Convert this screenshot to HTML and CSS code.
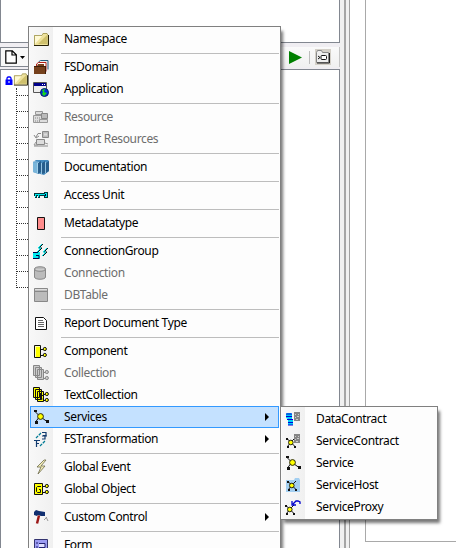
FILE: index.html
```html
<!DOCTYPE html>
<html lang="en">
<head>
<meta charset="utf-8">
<title>Explorer</title>
<link rel="stylesheet" href="styles.css">
</head>
<body>
<svg class="defs" aria-hidden="true">
<symbol id="folder" viewBox="0 0 16 16"><path d="M1 4h8l1-2h4l1 2v10H1z" fill="#eee29c"/><path d="M2 5l8-1-8 9z" fill="#fff9d4"/><path d="M14 4l-9 9h9z" fill="#cfc06c"/><path d="M1.500 14V4.500H9l1-2h4l1 2V14" fill="none" stroke="#918948" stroke-width=".7"/><path d="M1 14.500h14.500V4" fill="none" stroke="#262006"/></symbol>
<symbol id="atom" viewBox="0 0 16 16"><path d="M2 2.500l5 5 7 5M7 7l-4.500 6" stroke="#111" fill="none"/><path d="M1 1h3v2H1zM2 12h3v3H2zM13 11h3v3h-3z" fill="#111"/><circle cx="7.500" cy="7.500" r="2.900" fill="#ff0" stroke="#252510"/></symbol>
<symbol id="mini" viewBox="0 0 10 11"><path d="M1 1.500l3 3 5 5M5 5l-3.500 4.500M5 5l4-4" stroke="#111" fill="none"/><path d="M0 1h2v2H0zM1 9h2v2H1zM8 9h2v2H8z" fill="#111"/><circle cx="4.800" cy="5.500" r="2.300" fill="#ff0" stroke="#252510"/></symbol>
<symbol id="rack" viewBox="0 0 6 9"><path d="M0 0h6v9H0z" fill="#858585"/><path d="M1 2.500h1M4 2.500h1M1 5.500h1M3 4.500h2M2 7.500h2" stroke="#ccc" fill="none"/></symbol>
<symbol id="nodes" viewBox="0 0 6 12"><path d="M0 3.500h2M0 9.500h2" stroke="currentColor"/><circle cx="3.800" cy="3" r="1.600" fill="var(--fill)" stroke="currentColor"/><circle cx="3.800" cy="9" r="1.600" fill="var(--fill)" stroke="currentColor"/></symbol>
</svg>
<div class="window">
  <div class="explorer">
    <div class="output"></div>
    <div class="toolbar">
      <div class="tools-left">
        <svg class="page" viewBox="0 0 12 14"><path d="M.8 .8h6.500l4 4v8.400H.8zM7 1v4h4" fill="#fff" stroke="#000" stroke-width="1.200"/></svg>
        <svg class="drop" viewBox="0 0 5 3"><path d="M0 0h5L2.500 3z"/></svg>
      </div>
      <div class="tools-right">
        <svg class="play" viewBox="0 0 13 13"><path d="M0 0l13 6.500L0 13z" fill="#008000"/></svg>
        <span class="divider"></span>
        <svg class="camera" viewBox="0 0 16 16"><path d="M0 0h16v16H0z" fill="#d4d0c8"/><path d="M1.500 13.500v-10l1-2h4l1 2h6v10z" fill="#eee" stroke="#888"/><path d="M2 14h12.500V4" fill="none" stroke="#222"/><rect x="6" y="6.500" width="5.500" height="4" rx="1" fill="#fff" stroke="#111"/><path d="M3 7l2 1.500L3 10" fill="none" stroke="#111"/></svg>
      </div>
    </div>
    <div class="tree">
      <div class="root"><svg class="lock" viewBox="0 0 8 9"><path d="M2 4V2l1-1h2l1 1v2" fill="none" stroke="#00f" stroke-width="1.300"/><path d="M.5 3.500h7V9h-7z" fill="#00f"/><path d="M4 5v2" stroke="#fff"/></svg><svg class="icon"><use href="#folder"/></svg></div>
      <div class="branches"><i></i><i></i><i></i><i></i><i></i><i></i><i></i><i></i><i></i><i></i><i></i><i></i><i></i></div>
    </div>
  </div>
  <div class="splitter"></div>
  <div class="document"><div class="sheet"></div></div>
</div>

<div class="menu main-menu">
  <div class="item"><svg class="icon"><use href="#folder"/></svg><span>Namespace</span></div>
  <hr>
  <div class="item"><svg class="icon" viewBox="0 0 16 16"><path d="M5.500 5V3l2-1.500h7.500v9" fill="#eee" stroke="#255b7b"/><path d="M3.500 7V5l2-1.500h7.500v9" fill="#fff" stroke="#b32216"/><path d="M1 7h3l1-2h6v2h2v8H1z" fill="#75401c"/><path d="M1 7.500h12M12.500 8v7" stroke="#401f09"/></svg><span>FSDomain</span></div>
  <div class="item"><svg class="icon" viewBox="0 0 16 16"><path d="M.5 1.500h13v10H.5z" fill="#eee" stroke="#555"/><path d="M1 2h12v3H1z" fill="#00008b"/><path d="M9 3.500h1M11 3.500h1" stroke="#fff"/><circle cx="11.500" cy="11.500" r="4" fill="#0030db" stroke="#032060"/><path d="M9 9l3-1-1 3 3 1-3 3-2-2 1-2z" fill="#19d719"/></svg><span>Application</span></div>
  <hr>
  <div class="item disabled"><svg class="icon" viewBox="0 0 16 16"><path d="M2.500 2.500h7v3h-7zM.5 6.500h11v7H.5z" fill="#ddd" stroke="#999"/><path d="M2 9h6M2 12h6" stroke="#888" stroke-dasharray="1"/><path d="M8.500 4.500h6v5h-6z" fill="#bbb" stroke="#888"/><path d="M6.500 10.500h8v3h-8z" fill="#ddd" stroke="#999"/></svg><span>Resource</span></div>
  <div class="item disabled"><svg class="icon" viewBox="0 0 16 16"><path d="M9.500 .5h6v6h-6z" fill="#bbb" stroke="#888"/><path d="M11 2.500h3v2h-3z" fill="#ddd"/><path d="M8 2.500H5L3 6M1 4l2 3 3-2" fill="none" stroke="#888"/><path d="M3.500 8.500h8v5h-8zM1 15h14" fill="#ddd" stroke="#888"/><path d="M3 11l-2 3h4M12 12l3 1" fill="none" stroke="#999"/></svg><span>Import Resources</span></div>
  <hr>
  <div class="item"><svg class="icon" viewBox="0 0 16 16"><path d="M0 3l3-2h12l1 1v10l-5 4-11-3z" fill="#458bbf"/><path d="M0 3l5 1v11l-5-2z" fill="#79b5da"/><path d="M5 4l3-2v11l-3 2zM9 4l3-2v12l-3 1zM13 4l3-2v10l-3 2z" fill="#285f8d"/><path d="M1 2.500l5 1M4.500 4v10M8.500 4v11M12.500 3v11" stroke="#b4dbf1" stroke-width=".7"/></svg><span>Documentation</span></div>
  <hr>
  <div class="item"><svg class="icon" viewBox="0 0 16 16"><path d="M1 6h10V5h4v6h-4V9H7v2H5V9H4v2H2V9H1z" fill="#00373c"/><path d="M2 7h10V6h2v4h-2V8H6v2H5V8H3v2H2z" fill="#00e9ed"/><path d="M12.500 7v2" stroke="#003"/></svg><span>Access Unit</span></div>
  <hr>
  <div class="item"><svg class="icon" viewBox="0 0 16 16"><path d="M4.500 2.500h7v12h-7z" fill="#ff8c8c" stroke="#151010"/></svg><span>Metadatatype</span></div>
  <hr>
  <div class="item"><svg class="icon" viewBox="0 0 16 16"><path d="M0 9h7v7H0z" fill="#00eaf0"/><path d="M0 9.500h5M0 15.500h6M3 12.500h3v3" fill="none" stroke="#004"/><path d="M10 1L6 5h3L5 9M15 5l-4 4h3l-4 4" stroke="#111" fill="none"/><path d="M9 1L5 5h3L4 9M14 5l-4 4h3l-4 4" fill="none" stroke="#00e5e9"/></svg><span>ConnectionGroup</span></div>
  <div class="item disabled"><svg class="icon" viewBox="0 0 16 16"><path d="M1.500 4c0-3 11-3 11 0v8c0 3-11 3-11 0z" fill="#bbb" stroke="#888"/><path d="M1.500 4c0 3 11 3 11 0" fill="#ccc" stroke="#888"/></svg><span>Connection</span></div>
  <div class="item disabled"><svg class="icon" viewBox="0 0 16 16"><path d="M1.500 1.500h13v13h-13z" fill="#bbb" stroke="#888"/><path d="M2 4.500h12" stroke="#888"/><path d="M2 2.500h12" stroke="#ddd"/></svg><span>DBTable</span></div>
  <hr>
  <div class="item"><svg class="icon" viewBox="0 0 16 16"><path d="M2.500 2.500h8l3 3v9h-11z" fill="#fff" stroke="#111"/><path d="M5 5.500h5M5 7.500h6M5 9.500h6M5 11.500h6" stroke="#666"/></svg><span>Report Document Type</span></div>
  <hr>
  <div class="item"><svg class="icon yellow" viewBox="0 0 16 16"><path d="M1.500 2.500h6v12h-6z" fill="#ff0" stroke="#111"/><path d="M2.500 3v11M3 3.500h4" stroke="#ffffae"/><use href="#nodes" x="8" y="3" width="6" height="12"/></svg><span>Component</span></div>
  <div class="item disabled"><svg class="icon gray" viewBox="0 0 16 16"><path d="M.5 .5h6v10h-6zM2.500 2.500h6v10h-6zM4.500 4.500h6v10h-6z" fill="#ccc" stroke="#888"/><use href="#nodes" x="10" y="4" width="6" height="12"/></svg><span>Collection</span></div>
  <div class="item"><svg class="icon yellow" viewBox="0 0 16 16"><path d="M.5 .5h6v10h-6zM2.500 2.500h6v10h-6zM4.500 4.500h6v10h-6z" fill="#ff0" stroke="#111"/><path d="M7.500 6v6h2M6 8.500h4" fill="none" stroke="#111"/><use href="#nodes" x="10" y="4" width="6" height="12"/></svg><span>TextCollection</span></div>
  <div class="item active"><svg class="icon"><use href="#atom"/></svg><span>Services</span><b class="arrow"></b></div>
  <div class="item"><svg class="icon" viewBox="0 0 16 16"><path d="M1 9.500h6M3.500 10v6M3 12.500h3M9 1.500h4v3h-3M9 5h5M12 5v3h-3" stroke="#123b6f" stroke-width="1.200" fill="none"/><path d="M7 15l5-5M3 7l5-5" stroke="#007b95" stroke-width="1.300" stroke-dasharray="3 1" fill="none"/></svg><span>FSTransformation</span><b class="arrow"></b></div>
  <hr>
  <div class="item"><svg class="icon" viewBox="0 0 16 16"><path d="M11 1L4 8h4l-3 7 7-8H8l5-6z" fill="#f5efb9" stroke="#6c6949" stroke-width=".8"/></svg><span>Global Event</span></div>
  <div class="item"><svg class="icon yellow" viewBox="0 0 16 16"><path d="M1.500 2.500h8v11h-8z" fill="#ff0" stroke="#111"/><path d="M8 5.500H4.500L3.500 6.500v4l1 1H7.500v-3H6" fill="none" stroke="#111"/><use href="#nodes" x="10" y="2" width="6" height="12"/></svg><span>Global Object</span></div>
  <hr>
  <div class="item"><svg class="icon" viewBox="0 0 16 16"><path d="M1 3l2-2 3 1 6 1v4H8L5 6 4 7 1 6z" fill="#102f70"/><path d="M6 6.500L4 14.500" stroke="#9c1919" stroke-width="2.500"/><path d="M11 11l3-3M13 8l2 4" stroke="#999"/></svg><span>Custom Control</span><b class="arrow"></b></div>
  <hr>
  <div class="item"><svg class="icon" viewBox="0 0 16 16"><path d="M1.500 2.500h13v13h-13z" fill="#9b9bf2" stroke="#33336f"/><path d="M6 6.500h6v4H6M3 6h2M3 10h2" fill="#dedeff" stroke="#222270"/></svg><span>Form</span></div>
</div>

<div class="menu submenu">
  <div class="item"><svg class="icon" viewBox="0 0 16 16"><path d="M1 3l1-1h4l1 1v5h1v6H3V8L1 7z" fill="#00cff5"/><path d="M1 3h6M1 5.500h6M2 8.500h6M3 11.500h5M3 14h5" stroke="#0000d5" stroke-width="1.200"/><use href="#rack" x="9" y="1" width="6" height="9"/></svg><span>DataContract</span></div>
  <div class="item"><svg class="icon" viewBox="0 0 16 16"><use href="#mini" x="1" y="4" width="10" height="11"/><use href="#rack" x="9" y="1" width="6" height="9"/></svg><span>ServiceContract</span></div>
  <div class="item"><svg class="icon"><use href="#atom"/></svg><span>Service</span></div>
  <div class="item"><svg class="icon" viewBox="0 0 16 16"><path d="M1 3h8l1-2h4l1 2v12H1z" fill="#a3cff1"/><use href="#mini" x="2" y="3" width="10" height="11"/></svg><span>ServiceHost</span></div>
  <div class="item"><svg class="icon" viewBox="0 0 16 16"><use href="#mini" x="0" y="5" width="10" height="11"/><path d="M15 5V3l-2-1h-2L8 5M7 2v4h4" fill="none" stroke="#0000cd" stroke-width="1.300"/></svg><span>ServiceProxy</span></div>
</div>
</body>
</html>
```

FILE: styles.css
```css
* { box-sizing: border-box; }
body { margin: 0; width: 456px; height: 548px; overflow: hidden; position: relative; background: #fff; font: 12px/22px "Noto Sans", sans-serif; letter-spacing: -0.36px; color: #000; }
svg { display: block; flex: none; }
.defs { position: absolute; width: 0; height: 0; }
.window { display: flex; height: 548px; }
.explorer { width: 340px; display: flex; flex-direction: column; background: #f0f0f0; }
.output { height: 43px; background: #fff; border: 1px solid #828790; border-top: 0; }
.toolbar { height: 26px; display: flex; justify-content: space-between; padding: 4px 0 2px; background: #f0eef2; }
.tools-left { width: 60px; border: 1px solid #828790; background: #f8f8f8; display: flex; align-items: center; gap: 3px; padding-left: 4px; }
.page { width: 12px; height: 14px; }
.drop { width: 5px; height: 3px; }
.tools-right { width: 60px; display: flex; align-items: center; padding-left: 9px; border-right: 1px solid #c5c5c5; background: linear-gradient(#fafafa, #f0f0f0); }
.play { width: 13px; height: 13px; }
.divider { width: 1px; height: 13px; background: #bdbdbd; margin: 0 5px 0 7px; }
.camera { width: 16px; height: 16px; }
.tree { flex: 1; border: 1px solid #828790; border-bottom: 0; background: #fff; }
.root { display: flex; align-items: center; height: 18px; padding-left: 4px; }
.lock { width: 8px; height: 9px; margin-top: 3px; }
.branches { width: 14px; margin-left: 15px; border-left: 1px dotted #333; }
.branches i { display: block; height: 16px; border-bottom: 1px dotted #333; }
.branches i:first-child { height: 8px; }
.splitter { width: 10px; border-right: 1px solid #a0a0a0; background: linear-gradient(90deg, #f0f0f0 4px, #a5a5a5 4px 6px, #f0f0f0 6px); }
.document { flex: 1; padding-left: 15px; background: #fff; }
.sheet { height: 542px; border-left: 1px solid #a9a9a9; border-bottom: 1px solid #a9a9a9; }
.menu { position: absolute; padding: 1px; border: 1px solid #808080; background: linear-gradient(90deg, #fcfcfc 1px, #f8f8f8 1px, #f0f0f0 24px, #fdfdfd 24px); box-shadow: 3px 4px 3px -1px #0008; }
.main-menu { left: 28px; top: 26px; width: 253px; height: 540px; }
.submenu { left: 280px; top: 406px; width: 158px; height: 114px; }
.item { height: 22px; display: flex; align-items: center; padding-left: 3px; position: relative; }
.icon { width: 16px; height: 16px; margin-right: 15px; }
.root .icon { width: 15px; height: 16px; margin: 0; }
.item span { white-space: nowrap; }
.disabled { color: #6d6d6d; }
hr { height: 1px; margin: 3px 0 2px 31px; border: 0; background: #bdbdbd; }
.active { background: #c4e1ff; box-shadow: inset 0 0 0 1px #3399ff; }
.arrow { margin-left: auto; margin-right: 10px; border: 4px solid transparent; border-left: 4px solid #000; border-right: 0; }
.yellow { --fill: #ff0; color: #111; }
.gray { --fill: #ccc; color: #888; }
```
